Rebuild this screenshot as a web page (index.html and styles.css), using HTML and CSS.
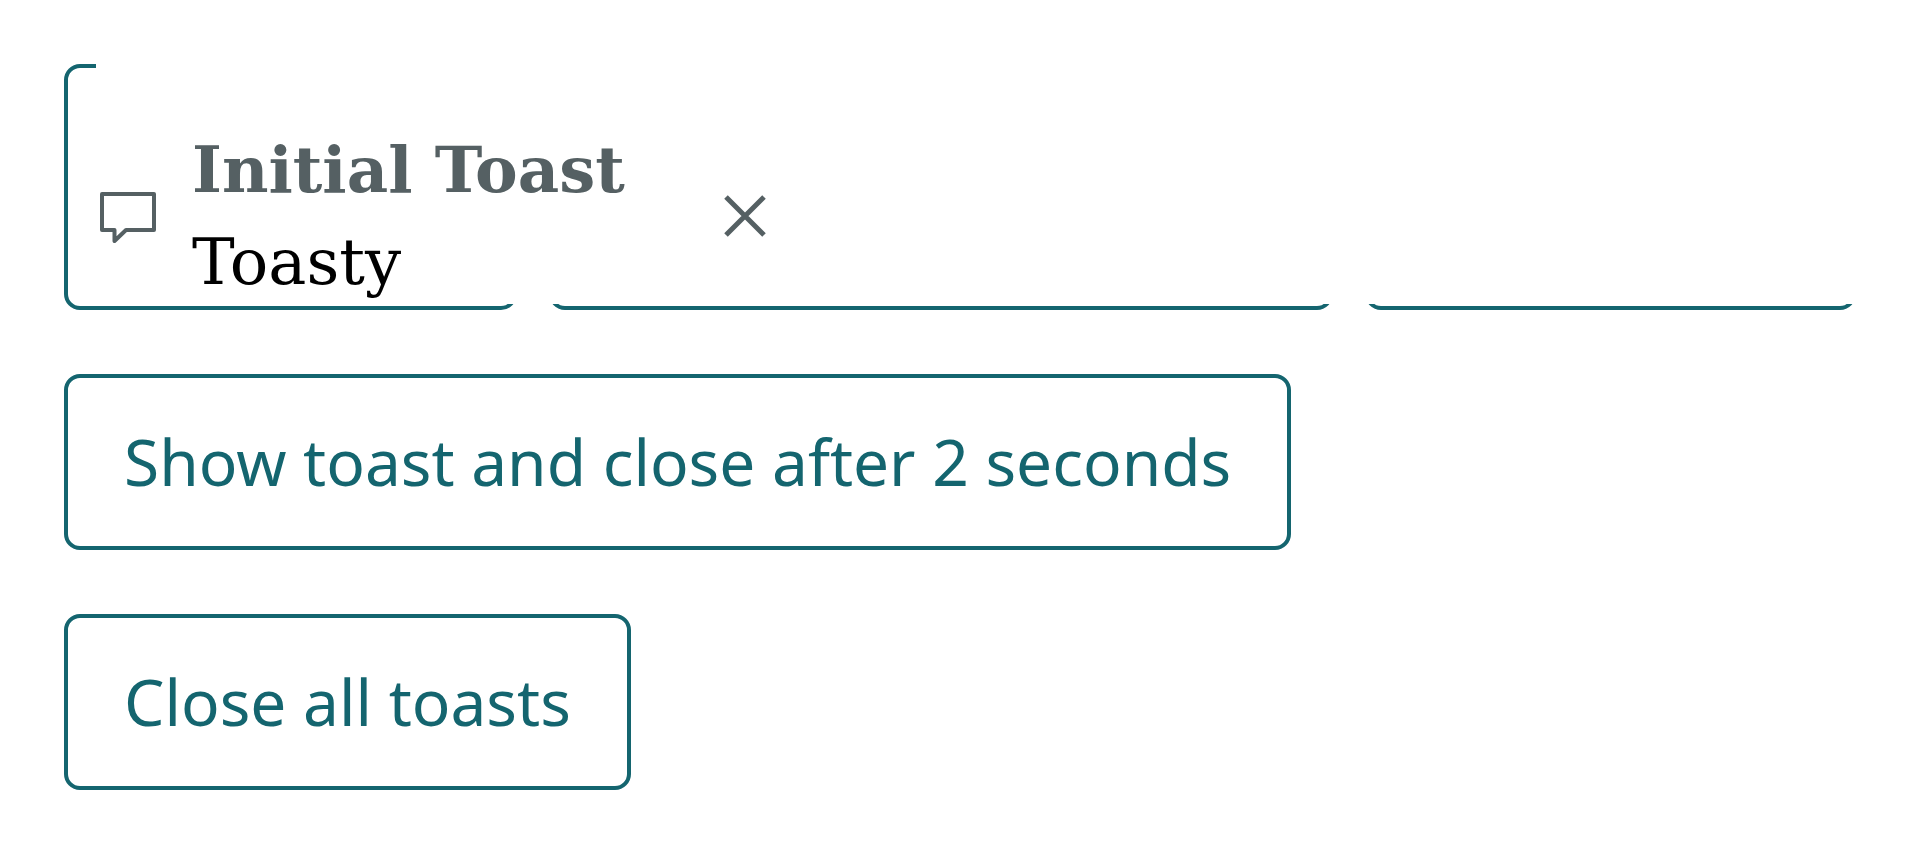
FILE: index.html
```html
<!DOCTYPE html>
<html lang="en">
<head>
<meta charset="utf-8">
<title>Toasts</title>
<link rel="stylesheet" href="styles.css">
</head>
<body>
<main class="page">
  <div class="row">
    <button class="button" type="button"></button>
    <button class="button" type="button"></button>
    <button class="button" type="button"></button>
  </div>
  <button class="button" type="button">Show toast and close after 2 seconds</button>
  <button class="button" type="button">Close all toasts</button>
</main>
<section class="toast-area">
  <div class="toast" role="status">
    <svg class="icon" viewBox="0 0 64 64" fill="none" stroke="currentColor" stroke-width="4" stroke-linejoin="round" aria-hidden="true">
      <path d="M6 10H58V46H30L18.500 57V46H6Z"/>
    </svg>
    <div class="toast-body">
      <strong class="toast-title">Initial Toast</strong>
      <span class="toast-text">Toasty</span>
    </div>
    <button class="toast-close" type="button" aria-label="Close">
      <svg class="icon" viewBox="0 0 64 64" fill="none" stroke="currentColor" stroke-width="5" aria-hidden="true">
        <path d="M13 13L51 51M51 13L13 51"/>
      </svg>
    </button>
  </div>
</section>
</body>
</html>
```
FILE: styles.css
```css
* { box-sizing: border-box; }
body { margin: 0; background: #fff; }

.page {
  display: flex;
  flex-direction: column;
  align-items: flex-start;
  gap: 64px;
  padding: 64px;
}
.row {
  display: grid;
  grid-template-columns: 453fr 784fr 491fr;
  gap: 32px;
  align-self: stretch;
  min-height: 246px;
}
.button {
  padding: 40px 56px;
  border: 4px solid #14656f;
  border-radius: 16px;
  background: #fff;
  color: #14656f;
  font: 64px/88px "Noto Sans", sans-serif;
}

/* Layer that floats over the page */
.toast-area {
  position: absolute;
  top: 0;
  left: 96px;
  right: 0;
  padding-top: 128px;
  background: #fff;
}
.toast {
  display: flex;
  align-items: center;
  gap: 32px;
  color: #556063;
  font: 64px/84px "DejaVu Serif", serif;
}
.icon { display: block; width: 64px; height: 64px; flex: none; }
.toast-body { display: flex; flex-direction: column; gap: 8px; }
.toast-title { font-weight: 700; }
.toast-text { color: #000; }
.toast-close {
  display: flex;
  justify-content: center;
  padding: 56px;
  border: 0;
  background: none;
  color: inherit;
}
```
